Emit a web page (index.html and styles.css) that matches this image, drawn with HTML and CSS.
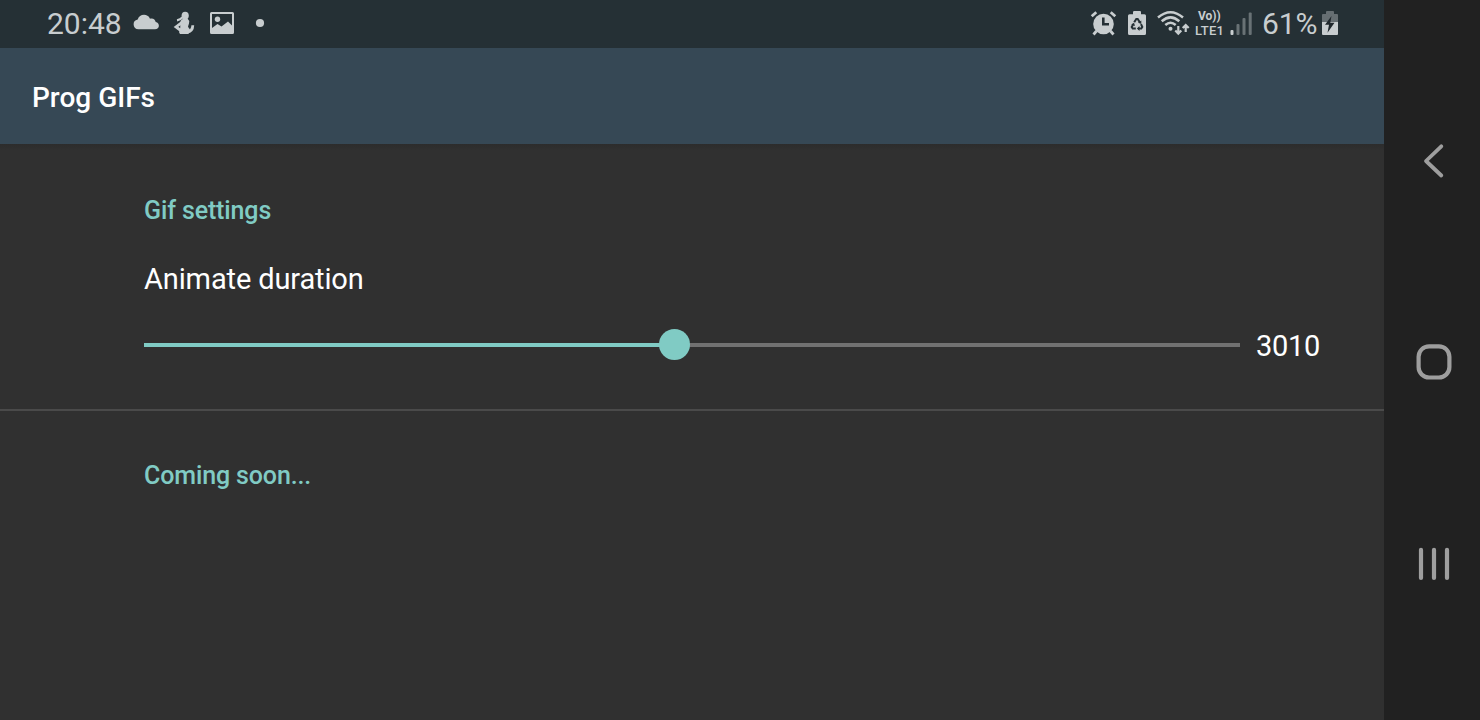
FILE: index.html
```html
<!DOCTYPE html>
<html lang="en">
<head>
<meta charset="utf-8">
<title>Prog GIFs</title>
<link rel="stylesheet" href="styles.css">
</head>
<body>
<div class="app">
  <header class="status">
    <div class="status-left">
      <span class="clock">20:48</span>
      <svg class="icon" width="42" height="48" viewBox="128 0 42 48"><path d="M138.500 29.300a5.500 5 0 0 1-.8-9.800C139 14 147.500 13 150 18.700C153 17.800 155.300 19.500 155.700 22C160.200 23 160 29.300 155 29.300Z"/></svg>
      <svg class="icon" width="34" height="48" viewBox="170 0 34 48">
        <ellipse cx="185.200" cy="15.600" rx="3.600" ry="3.900"/>
        <path class="line w2" d="M182.600 17.300Q180.500 19.800 177 20.300"/>
        <path d="M183.300 18.500H187.500Q189.600 20 189 23.500L188 26.500Q188.500 28 190 29.200L188.500 34H180Q178.500 32.500 179.500 30.500Q180.500 28.500 180.300 26L180 23Q180.500 19.800 183.300 18.500Z"/>
        <path class="line w3" d="M182 22.300L176 27L180.800 30.500"/>
        <path class="line w3" d="M187 32.200Q192.700 31.500 192.800 25.300"/>
      </svg>
      <svg class="icon" width="40" height="48" viewBox="204 0 40 48"><path fill-rule="evenodd" d="M211.500 12H232.500Q234 12 234 13.500V32.500Q234 34 232.500 34H211.500Q210 34 210 32.500V13.500Q210 12 211.500 12ZM212 14V28L217.500 24L221.500 26.500L228 21.500L232 25.500V14Z"/><circle cx="217.500" cy="19.300" r="2.700"/></svg>
      <svg class="icon" width="32" height="48" viewBox="244 0 32 48"><circle cx="260" cy="23" r="4.100"/></svg>
    </div>
    <div class="status-right">
      <svg class="icon" width="38" height="48" viewBox="1085 0 38 48"><circle cx="1103.500" cy="24" r="10.300"/><path class="line w3" d="M1091.700 16.300L1096.300 12.300M1110.700 12.300L1115.300 16.300M1096.500 31L1093.500 34.500M1110.500 31L1113.500 34.500"/><path class="line cut" d="M1103.300 17.500V24.300H1109"/></svg>
      <svg class="icon" width="31" height="48" viewBox="1123 0 31 48"><path d="M1129.500 14.200H1133V12.300Q1133 11 1134.200 11H1140Q1141 11 1141 12.300V14.200H1144.500Q1146 14.200 1146 15.700V33.500Q1146 35 1144.500 35H1129.500Q1128 35 1128 33.500V15.700Q1128 14.200 1129.500 14.200Z"/><path class="line cut thin" d="M1134.200 22.300L1136.300 18.900H1137.700L1139.800 22.300M1141 24.200L1142.300 27L1141.300 28.500H1138.200M1135.800 28.500H1132.700L1131.700 27L1133.300 24.200"/><path class="dark" d="M1138 22.700L1141.300 20.500V24ZM1139.500 26V31L1136.900 28.500ZM1131.200 24.600L1134 22.700L1135 26Z"/></svg>
      <svg class="icon" width="38" height="48" viewBox="1154 0 38 48"><path class="line wifi" d="M1158 17.500Q1170.500 7 1183 17.500M1161.700 21.300Q1170.500 13.500 1179.300 21.300M1165.300 25Q1170.500 20.500 1175.700 25"/><circle cx="1170.500" cy="28.800" r="2"/><path class="line w2" d="M1178.300 26V33M1175.300 30.500L1178.300 33.600L1181.300 30.500M1185.700 32V25.500M1182.700 28L1185.700 25L1188.700 28"/></svg>
      <span class="volte"><span class="vo">Vo))</span><span class="lte">LTE1</span></span>
      <svg class="icon" width="32" height="48" viewBox="1227 0 32 48"><rect x="1230.500" y="30" width="3" height="5" rx="1"/><g opacity=".42"><rect x="1236.500" y="24" width="3" height="11" rx="1"/><rect x="1242.500" y="18" width="3" height="17" rx="1"/><rect x="1248.700" y="12.500" width="3" height="22.500" rx="1"/></g></svg>
      <span class="percent">61%</span>
      <svg class="icon" width="22" height="48" viewBox="1319 0 22 48"><path opacity=".4" d="M1322 22V15Q1322 14 1323 14H1326V12Q1326 11 1327 11H1333Q1334 11 1334 12V14H1337Q1338 14 1338 15V22Z"/><path d="M1322 22H1338V34Q1338 35 1337 35H1323Q1322 35 1322 34Z"/><path class="bolt" d="M1331.500 16L1325 24.700H1329L1327.500 32.700L1334.500 22.800H1330.300Z"/></svg>
    </div>
  </header>
  <div class="toolbar"><h1 class="title">Prog GIFs</h1></div>
  <main class="content">
    <section class="group">
      <h2 class="heading">Gif settings</h2>
      <div class="label">Animate duration</div>
      <div class="setting">
        <div class="track"><div class="fill"></div><div class="thumb"></div></div>
        <span class="value">3010</span>
      </div>
    </section>
    <section class="group soon"><h2 class="heading">Coming soon...</h2></section>
  </main>
</div>
<nav class="nav">
  <svg class="nav-icon" width="48" height="48" viewBox="0 0 48 48"><path stroke-width="3.800" d="M31.300 9.300L16 24L31.300 38.500"/></svg>
  <svg class="nav-icon" width="48" height="48" viewBox="0 0 48 48"><rect x="8.600" y="7.300" width="30.800" height="31.200" rx="10.500" stroke-width="4.200"/></svg>
  <svg class="nav-icon" width="48" height="48" viewBox="0 0 48 48"><path stroke-width="4.200" d="M11 9.800V38M24 9.800V38M37 9.800V38"/></svg>
</nav>
</body>
</html>
```

FILE: styles.css
```css
* { box-sizing: border-box; }
body {
  margin: 0;
  width: 1480px;
  height: 720px;
  display: flex;
  overflow: hidden;
  background: #303030;
  color: #fff;
  font-family: Roboto, "Liberation Sans", sans-serif;
}
.app { width: 1384px; height: 720px; }
.status {
  height: 48px;
  background: #253035;
  color: #c8cdcf;
  display: flex;
  justify-content: space-between;
  padding: 0 43px 0 47px;
}
.status-left, .status-right { display: flex; line-height: 48px; }
.icon { display: block; flex: none; fill: #c8cdcf; }
.line { fill: none; stroke: #c8cdcf; }
.w3 { stroke-width: 2.8; }
.w2 { stroke-width: 2.2; }
.wifi { stroke-width: 2.5; }
.cut { stroke: #253035; stroke-width: 2.6; }
.thin { stroke-width: 2; }
.dark { fill: #253035; }
.bolt { fill: #20282d; }
.clock { width: 81px; font-size: 30px; }
.percent { width: 60px; padding-left: 3px; font-size: 30px; letter-spacing: -0.1px; white-space: nowrap; }
.volte {
  width: 35px;
  padding: 9px 0 0 3px;
  display: flex;
  flex-direction: column;
  font-weight: 700;
}
.vo { padding-left: 3px; font-size: 12px; line-height: 14px; letter-spacing: 0; }
.lte { font-size: 13px; line-height: 15px; letter-spacing: 0.3px; font-weight: 500; }
.toolbar {
  height: 96px;
  padding: 3px 32px 0;
  background: #364855;
  display: flex;
  align-items: center;
}
.title { margin: 0; font-size: 28px; font-weight: 500; line-height: 36px; }
.content { height: 576px; background: linear-gradient(#2c2c2c, #303030 6px); }
.group { padding: 51px 62px 0 144px; }
.group:first-child { height: 267px; border-bottom: 2px solid #4a4a4a; }
.heading { margin: 0; font-size: 25px; font-weight: 500; line-height: 32px; letter-spacing: -0.13px; color: #80cbc4; }
.label { margin-top: 34px; font-size: 29px; line-height: 36px; letter-spacing: -0.13px; }
.setting { height: 36px; margin-top: 31px; display: flex; align-items: center; gap: 16px; }
.track { position: relative; width: 1096px; height: 4px; margin-bottom: 2px; background: #717171; }
.fill { width: 531px; height: 4px; background: #80cbc4; }
.thumb {
  position: absolute;
  left: 515px;
  top: -14px;
  width: 31px;
  height: 31px;
  border-radius: 50%;
  background: #80cbc4;
}
.value { font-size: 29px; line-height: 36px; letter-spacing: -0.3px; }
.soon { padding-top: 49px; }
.nav {
  width: 96px;
  height: 720px;
  padding: 137px 0 132px 4px;
  background: #212121;
  display: flex;
  flex-direction: column;
  align-items: center;
  justify-content: space-between;
}
.nav-icon { fill: none; stroke: #9e9e9e; stroke-linecap: round; stroke-linejoin: round; }
```
